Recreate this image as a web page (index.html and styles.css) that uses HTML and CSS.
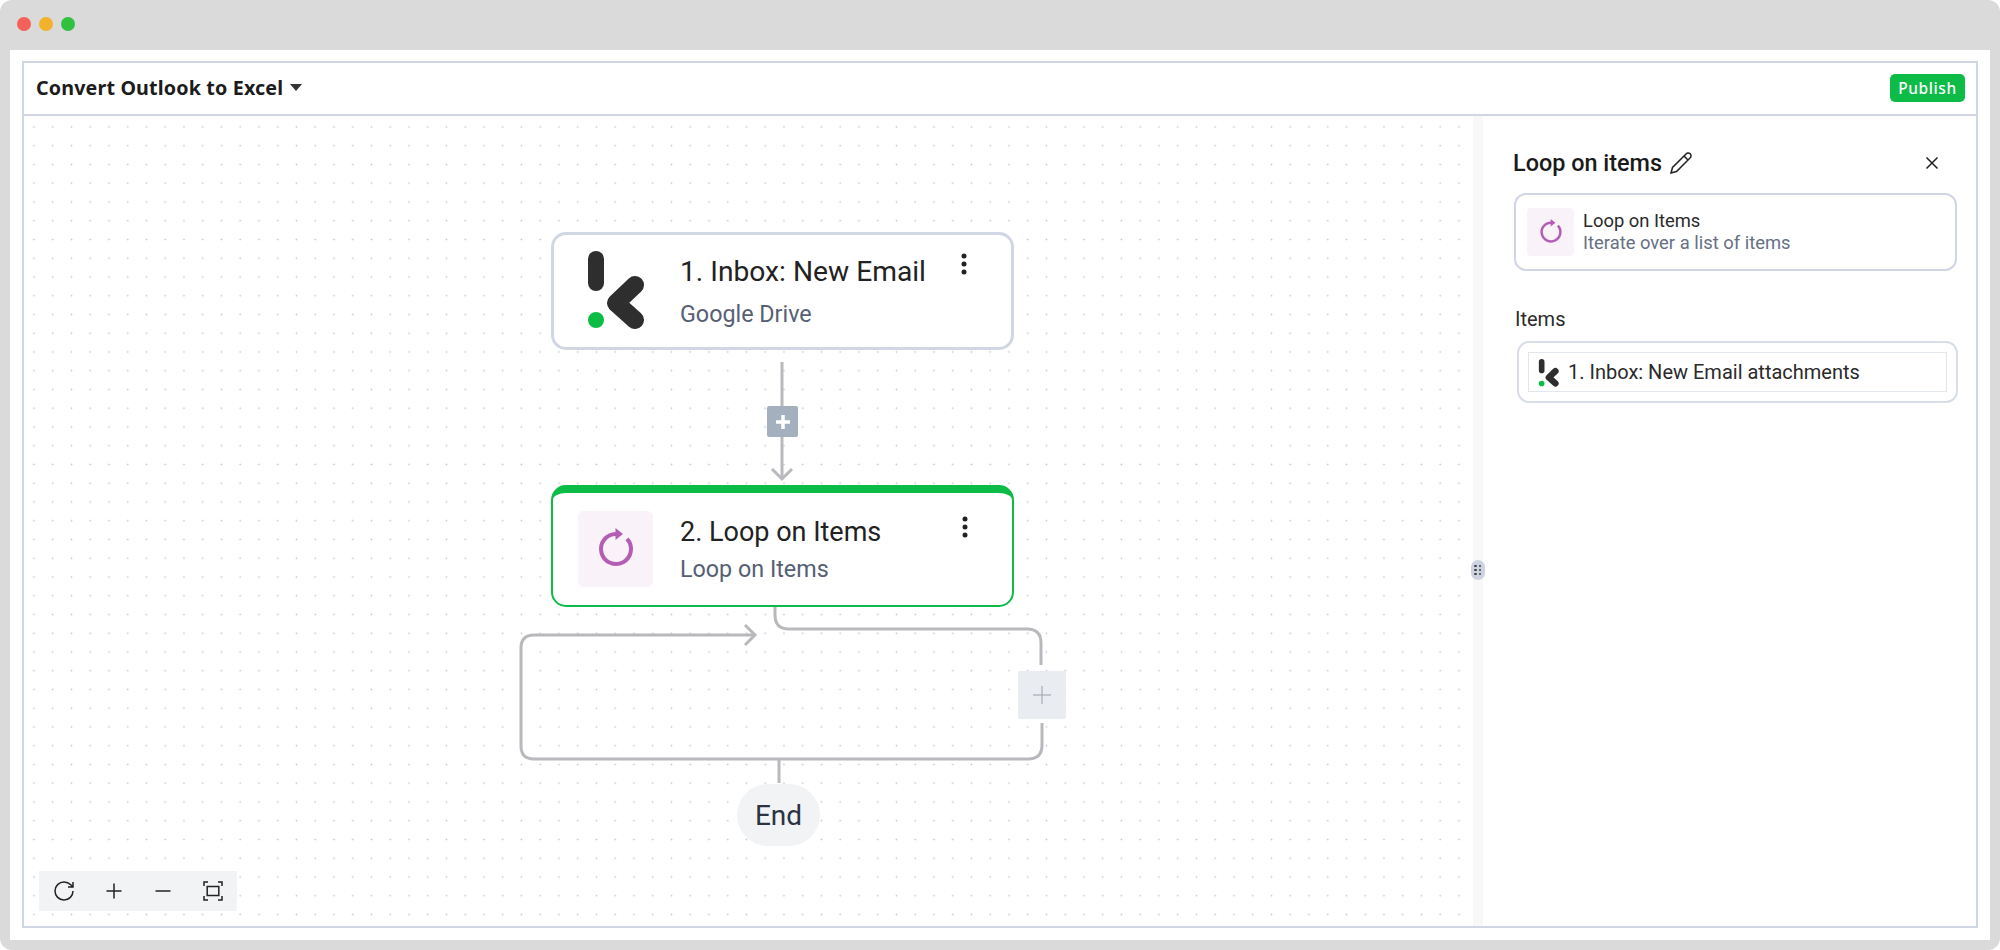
FILE: index.html
```html
<!DOCTYPE html>
<html lang="en">

<head>
    <meta charset="UTF-8">
    <title>Convert Outlook to Excel</title>
    <link rel="stylesheet" href="styles.css">
</head>

<body>
    <svg class="defs" width="0" height="0" xmlns="http://www.w3.org/2000/svg">
        <symbol id="logo" viewBox="0 0 65 85">
            <rect x="8" y="6" width="16" height="40" rx="8" fill="#2e2e2e"></rect>
            <circle cx="16" cy="75" r="8" fill="#0dbb47"></circle>
            <path d="M55 40 36 58 55 75" fill="none" stroke="#2e2e2e" stroke-width="18" stroke-linecap="round" stroke-linejoin="round"></path>
        </symbol>
        <symbol id="loop" viewBox="0 0 48 48">
            <path d="M24 9A15 15 0 1 0 35 13.800" fill="none" stroke="#b35db5" stroke-width="4"></path>
            <path d="M23.500 3 31 9 23.500 15Z" fill="#b35db5"></path>
        </symbol>
        <symbol id="kebab" viewBox="0 0 10 24">
            <circle cx="5" cy="4" r="2.500" fill="#222"></circle>
            <circle cx="5" cy="12" r="2.500" fill="#222"></circle>
            <circle cx="5" cy="20" r="2.500" fill="#222"></circle>
        </symbol>
    </svg>

    <div class="window">
        <div class="titlebar">
            <span class="light light-red"></span>
            <span class="light light-amber"></span>
            <span class="light light-green"></span>
        </div>

        <div class="content">
            <div class="frame">
                <header class="topbar">
                    <div class="flow-name">
                        <span>Convert Outlook to Excel</span>
                        <i class="caret"></i>
                    </div>
                    <button class="publish">Publish</button>
                </header>

                <div class="main">
                    <div class="canvas">
                        <!-- connectors -->
                        <svg class="wires" width="1449" height="810" xmlns="http://www.w3.org/2000/svg">
                            <g fill="none" stroke="#b9b9bd" stroke-width="3">
                                <path d="M758 246V362"></path>
                                <path d="M748 353 758 363 768 353"></path>
                                <path d="M751 491V499Q751 513 765 513H1003Q1017 513 1017 527V549"></path>
                                <path d="M1018 607V629Q1018 643 1004 643H510Q497 643 497 630V532Q497 519 510 519H731"></path>
                                <path d="M721 509 731 519 721 529"></path>
                                <path d="M755 643V667"></path>
                            </g>
                        </svg>

                        <div class="node node-first">
                            <svg class="node-logo" width="65" height="85"><use href="#logo"></use></svg>
                            <div class="node-text">
                                <div class="node-title">1. Inbox: New Email</div>
                                <div class="node-sub">Google Drive</div>
                            </div>
                            <svg class="node-menu" width="10" height="24"><use href="#kebab"></use></svg>
                        </div>

                        <div class="add-step">
                            <svg width="16" height="16" viewBox="0 0 16 16"><path d="M8 1V15M1 8H15" stroke="#fff" stroke-width="3.500"></path></svg>
                        </div>

                        <div class="node node-active">
                            <div class="icon-tile">
                                <svg width="48" height="48"><use href="#loop"></use></svg>
                            </div>
                            <div class="node-text">
                                <div class="node-title">2. Loop on Items</div>
                                <div class="node-sub">Loop on Items</div>
                            </div>
                            <svg class="node-menu" width="10" height="24"><use href="#kebab"></use></svg>
                        </div>

                        <div class="add-loop">
                            <svg width="20" height="20" viewBox="0 0 20 20"><path d="M10 1V19M1 10H19" stroke="#9b9fa8" stroke-width="1"></path></svg>
                        </div>

                        <div class="end-node">End</div>

                        <div class="zoom-tools">
                            <svg width="24" height="24" viewBox="0 0 24 24"><path d="M21 12a9 9 0 1 1-9-9c2.520 0 4.930 1 6.740 2.740L21 8M21 3v5h-5"></path></svg>
                            <svg width="24" height="24" viewBox="0 0 24 24"><path d="M12 4.500V19.500M4.500 12H19.500"></path></svg>
                            <svg width="24" height="24" viewBox="0 0 24 24"><path d="M4.500 12H19.500"></path></svg>
                            <svg width="24" height="24" viewBox="0 0 24 24"><path d="M3 7V3H7M17 3H21V7M21 17V21H17M7 21H3V17"></path><rect x="6.200" y="7.500" width="11.600" height="9"></rect></svg>
                        </div>
                    </div>

                    <div class="divider">
                        <div class="grip">
                            <span></span><span></span><span></span><span></span><span></span><span></span>
                        </div>
                    </div>

                    <aside class="panel">
                        <div class="panel-head">
                            <h2 class="panel-title">Loop on items</h2>
                            <svg class="pencil" width="24" height="24" viewBox="0 0 24 24"><path d="M17 3a2.850 2.830 0 1 1 4 4L7.500 20.500 2 22l1.500-5.500ZM15 5l4 4"></path></svg>
                            <svg class="close" width="16" height="16" viewBox="0 0 16 16"><path d="M2.500 2.500 13.500 13.500M13.500 2.500 2.500 13.500"></path></svg>
                        </div>

                        <div class="step-card">
                            <div class="icon-tile icon-tile-small">
                                <svg width="30" height="30"><use href="#loop"></use></svg>
                            </div>
                            <div>
                                <div class="step-name">Loop on Items</div>
                                <div class="step-desc">Iterate over a list of items</div>
                            </div>
                        </div>

                        <div class="field-label">Items</div>
                        <div class="field">
                            <div class="field-input">
                                <svg class="chip-logo" width="23" height="30"><use href="#logo"></use></svg>
                                <span>1. Inbox: New Email attachments</span>
                            </div>
                        </div>
                    </aside>
                </div>
            </div>
        </div>
    </div>
</body>

</html>
```

FILE: styles.css
```css
* {
    box-sizing: border-box;
}

html,
body {
    margin: 0;
    height: 100%;
    background: #fff;
    overflow: hidden;
}

body {
    font-family: Roboto, "Noto Sans", sans-serif;
    color: #1a1a1a;
}

.defs {
    position: absolute;
}

.window {
    height: 950px;
    padding: 0 10px 10px;
    display: flex;
    flex-direction: column;
    background: #dadada;
    border-radius: 12px;
}

/* window buttons */
.titlebar {
    height: 50px;
    padding: 0 7px 2px;
    display: flex;
    align-items: center;
    gap: 8px;
    flex-shrink: 0;
}

.light {
    width: 14px;
    height: 14px;
    border-radius: 50%;
}

.light-red {
    background: #f4605a;
}

.light-amber {
    background: #f2b22c;
}

.light-green {
    background: #2fc13f;
}

.content {
    flex: 1;
    min-height: 0;
    padding: 11px 12px 12px;
    background: #fff;
}

.frame {
    height: 100%;
    display: flex;
    flex-direction: column;
    border: 2px solid #d0d6e3;
}

.topbar {
    height: 53px;
    padding: 0 11px 2px 12px;
    display: flex;
    align-items: center;
    justify-content: space-between;
    flex-shrink: 0;
    border-bottom: 2px solid #d0d6e3;
}

.flow-name {
    display: flex;
    align-items: center;
    gap: 7px;
    font-family: "Noto Sans", sans-serif;
    font-size: 19.700px;
    font-weight: 700;
    letter-spacing: 0.15px;
    color: #1c1c1c;
}

.caret {
    width: 0;
    height: 0;
    border-left: 6px solid transparent;
    border-right: 6px solid transparent;
    border-top: 7px solid #333;
}

.publish {
    width: 75px;
    height: 28px;
    padding: 0;
    border: 0;
    border-radius: 5px;
    background: #0dbb47;
    color: #fff;
    font-family: "Noto Sans", sans-serif;
    font-size: 15.500px;
    font-weight: 500;
    letter-spacing: 0.6px;
}

.main {
    flex: 1;
    min-height: 0;
    display: flex;
}

/* canvas */
.canvas {
    position: relative;
    flex: 1;
    background-image: radial-gradient(circle, #c6cad3 0.8px, transparent 1.1px);
    background-size: 18.750px 18.750px;
    background-position: 0.6px 1.6px;
}

.wires {
    position: absolute;
    top: 0;
    left: 0;
}

.node {
    position: absolute;
    left: 527px;
    width: 463px;
    display: flex;
    align-items: center;
    background: #fff;
    border-radius: 15px;
}

.node-first {
    top: 116px;
    height: 118px;
    border: 3px solid #d0d6e3;
}

.node-active {
    top: 369px;
    height: 122px;
    border: 2.500px solid #0dbb47;
    border-top-width: 8px;
}

.node-logo {
    flex-shrink: 0;
    margin: 0 35px 8px 26px;
}

.icon-tile {
    width: 75px;
    height: 76px;
    margin-left: 25px;
    margin-right: 27px;
    flex-shrink: 0;
    display: flex;
    align-items: center;
    justify-content: center;
    background: #f9f2f9;
    border-radius: 6px;
}

.icon-tile-small {
    width: 47px;
    height: 48px;
    margin: 0 9px 0 -1px;
    border-radius: 4px;
}

.node-text {
    flex: 1;
    min-width: 0;
}

.node-title {
    line-height: 34px;
    color: #222;
}

.node-first .node-title {
    margin-top: 2px;
    font-size: 28.200px;
}

.node-active .node-title {
    font-size: 27px;
}

.node-sub {
    font-size: 23.300px;
    line-height: 30px;
    color: #566074;
}

.node-first .node-sub {
    margin-top: 10px;
}

.node-active .node-sub {
    margin-top: 5px;
}

.node-menu {
    flex-shrink: 0;
    margin-right: 42px;
    align-self: flex-start;
}

.node-first .node-menu {
    margin-top: 17px;
}

.node-active .node-menu {
    margin-top: 22px;
}

.add-step {
    position: absolute;
    left: 743px;
    top: 290px;
    width: 31px;
    height: 31px;
    display: flex;
    align-items: center;
    justify-content: center;
    background: #a5b0bf;
    border-radius: 2px;
}

.add-loop {
    position: absolute;
    left: 994px;
    top: 555px;
    width: 48px;
    height: 48px;
    display: flex;
    align-items: center;
    justify-content: center;
    background: #e9ecf0;
    border-radius: 2px;
}

.end-node {
    position: absolute;
    left: 713px;
    top: 668px;
    width: 83px;
    height: 62px;
    padding-top: 1px;
    display: flex;
    align-items: center;
    justify-content: center;
    background: #f2f3f5;
    border-radius: 31px;
    font-size: 28px;
    color: #2b3442;
}

.zoom-tools {
    position: absolute;
    left: 15px;
    bottom: 15px;
    width: 198px;
    height: 40px;
    padding: 0 12px 0 13px;
    display: flex;
    align-items: center;
    justify-content: space-between;
    background: #f2f3f5;
}

.zoom-tools svg,
.pencil,
.close {
    fill: none;
    stroke: #222;
    stroke-width: 1.500;
}

/* divider */
.divider {
    position: relative;
    width: 10px;
    flex-shrink: 0;
    background: #f8f8f8;
}

.grip {
    position: absolute;
    top: 444px;
    left: -2px;
    width: 14px;
    height: 20px;
    display: grid;
    grid-template-columns: 3px 3px;
    justify-content: center;
    align-content: center;
    gap: 1.500px;
    background: #cdd3e0;
    border-radius: 7px;
}

.grip span {
    width: 2.500px;
    height: 2.500px;
    background: #444;
    border-radius: 50%;
}

/* right panel */
.panel {
    width: 493px;
    flex-shrink: 0;
    padding: 31px 19px 0 30px;
    background: #fff;
}

.panel-head {
    display: flex;
    align-items: center;
    height: 32px;
}

.panel-title {
    margin: 0 7px 0 0;
    font-size: 23.400px;
    font-weight: 500;
}

.close {
    margin-left: auto;
    margin-right: 17px;
}

.step-card {
    margin: 14px 0 0 1px;
    height: 78px;
    padding: 0 12px;
    display: flex;
    align-items: center;
    border: 2px solid #d0d6e3;
    border-radius: 12px;
}

.step-name {
    font-size: 18.400px;
    line-height: 22px;
    color: #2a2a2a;
}

.step-desc {
    font-size: 18.400px;
    line-height: 22px;
    color: #667084;
}

.field-label {
    margin: 37px 0 0 2px;
    font-size: 20px;
    line-height: 22px;
    color: #2a2a2a;
}

.field {
    margin: 11px -1px 0 4px;
    height: 62px;
    padding: 9px;
    border: 2px solid #d8dde8;
    border-radius: 12px;
}

.field-input {
    height: 100%;
    padding-left: 7px;
    display: flex;
    align-items: center;
    gap: 9px;
    border: 1px solid #e2e6ee;
    font-size: 20px;
    color: #2a2a2a;
}
```
